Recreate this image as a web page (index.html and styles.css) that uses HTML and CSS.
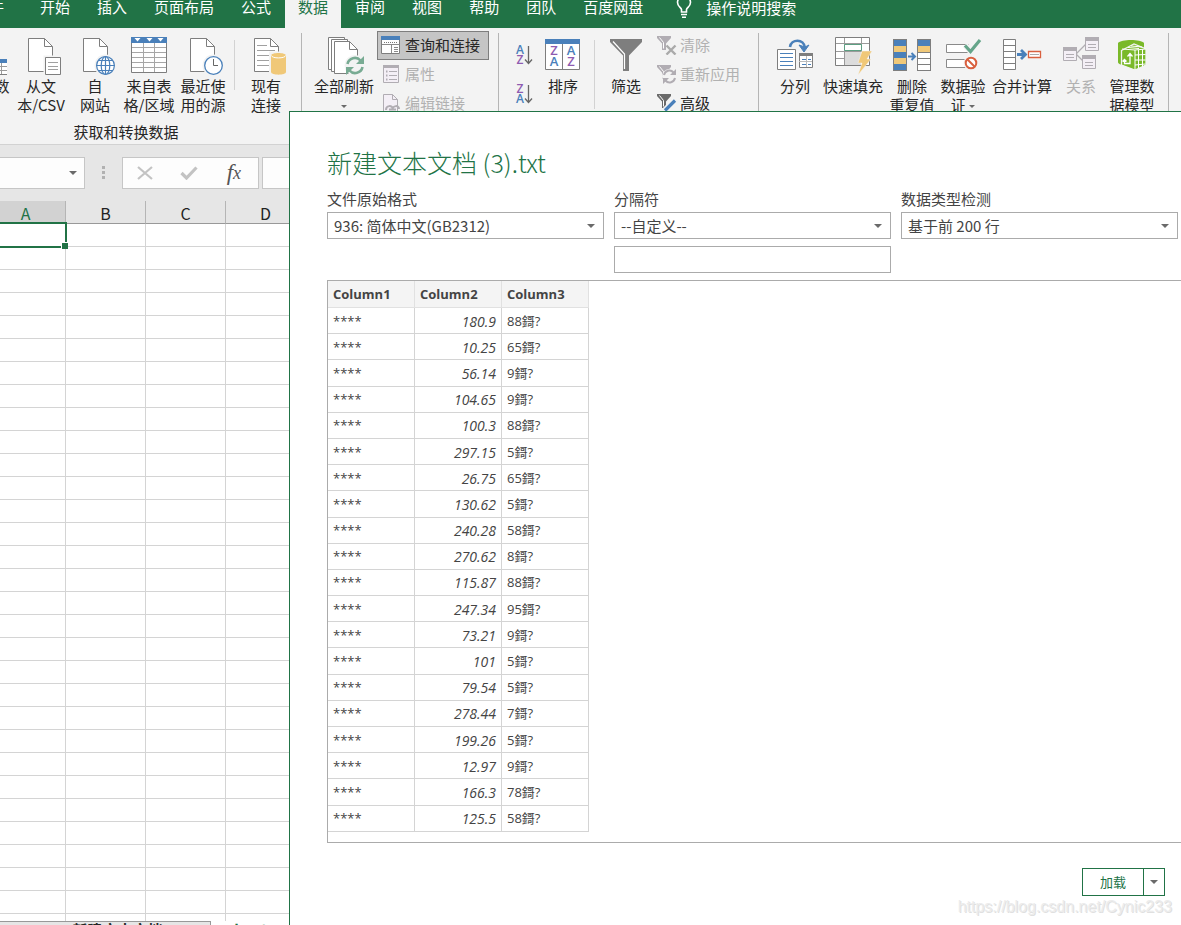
FILE: index.html
```html
<!DOCTYPE html>
<html lang="zh-CN">
<head>
<meta charset="utf-8">
<title>新建文本文档 (3).txt</title>
<link rel="stylesheet" href="styles.css">
</head>
<body>
<div class="app">
  <nav class="tabs">
    <button class="tab tab-file">文件</button>
    <button class="tab">开始</button>
    <button class="tab">插入</button>
    <button class="tab">页面布局</button>
    <button class="tab">公式</button>
    <button class="tab tab-active">数据</button>
    <button class="tab">审阅</button>
    <button class="tab">视图</button>
    <button class="tab">帮助</button>
    <button class="tab">团队</button>
    <button class="tab">百度网盘</button>
    <button class="tell-me">
      <svg width="16" height="22" viewBox="0 0 16 22" fill="none" stroke="#fff" stroke-width="1.6"><path d="M5.500 15v-2.500C5 10.500 1.500 9.500 1.500 5.500a6.500 6.500 0 0 1 13 0c0 4-3.500 5-4 7V15z"/><path d="M5 17.500h6M6 20.200h4"/></svg>
      <span>操作说明搜索</span>
    </button>
  </nav>

  <div class="ribbon">
    <section class="group group-get">
      <div class="row">
        <button class="big">
          <svg width="40" height="40" viewBox="-33 36 40 40"><path d="M-18.500 59.500h26v15h-26z" fill="#fff" stroke="#7e7e7e"/><path d="M-18 59h26v4h-26z" fill="#4a80ba"/><path d="M-18 66.500H8M-18 70.500H8M1.500 63v11" stroke="#9a9a9a"/></svg>
          <span>获取数<br>据</span>
        </button>
        <button class="big">
          <svg width="40" height="40" viewBox="21 36 40 40" fill="#fff" stroke="#7e7e7e"><path d="M28.500 38.500h16l8 8v25h-24z"/><path d="M44.500 38.500v8h8" fill="none"/><path d="M43.500 55.500h19v21h-19z" stroke="none" fill="#f3f3f3"/><path d="M45.500 57.500h15v17h-15z"/><path d="M48 62.500h10M48 66.500h10M48 69.500h10" stroke="#a0a0a0"/></svg>
          <span>从文<br>本/CSV</span>
        </button>
        <button class="big">
          <svg width="40" height="40" viewBox="75 36 40 40" fill="#fff" stroke="#7e7e7e"><path d="M83.500 38.500h16l8 8v25h-24z"/><path d="M99.500 38.500v8h8" fill="none"/><circle cx="105.500" cy="65.500" r="11" fill="#f3f3f3" stroke="none"/><g stroke="#4a80ba" stroke-width="1.200"><circle cx="105.500" cy="65.500" r="8.900"/><ellipse cx="105.500" cy="65.500" rx="4.300" ry="8.900"/><path d="M105.500 56.500v18M96.500 65.500h18M98 60.500h15M98 70.500h15" fill="none"/></g></svg>
          <span>自<br>网站</span>
        </button>
        <button class="big">
          <svg width="40" height="40" viewBox="129 36 40 40"><path d="M131.500 42.500h35v30h-35z" fill="#fff" stroke="#7e7e7e"/><path d="M132 47.500h34M132 52.500h34M132 57.500h34M132 62.500h34M132 67.500h34M143.500 43v29M154.500 43v29" stroke="#a6a6a6"/><path d="M131 37h36v6h-36z" fill="#4a80ba"/><path d="M134.500 38h6l-3 3.500zM146.500 38h6l-3 3.500zM157.500 38h6l-3 3.500z" fill="#fff"/></svg>
          <span>来自表<br>格/区域</span>
        </button>
        <button class="big">
          <svg width="40" height="40" viewBox="183 36 40 40" fill="#fff" stroke="#7e7e7e"><path d="M190.500 38.500h16l8 8v25h-24z"/><path d="M206.500 38.500v8h8" fill="none"/><circle cx="213.500" cy="65.500" r="11" fill="#f3f3f3" stroke="none"/><circle cx="213.500" cy="65.500" r="8.800" stroke="#4a80ba" stroke-width="1.300"/><path d="M213.500 59v6.500h4.500" fill="none" stroke="#666"/></svg>
          <span>最近使<br>用的源</span>
        </button>
        <i class="rule rule-get"></i>
        <button class="big w52">
          <svg width="40" height="40" viewBox="246 36 40 40" fill="#fff" stroke="#7e7e7e"><path d="M254.500 38.500h16l8 8v25h-24z"/><path d="M270.500 38.500v8h8" fill="none"/><path d="M257 45.500h10M257 50.500h18M257 55.500h18M257 60.500h18M257 65.500h18" stroke="#a0a0a0"/><path d="M269 51.500h18v24h-18z" fill="#f3f3f3" stroke="none"/><path d="M271 55.500c0-3.500 15-3.500 15 0v16.500c0 3.500-15 3.500-15 0z" fill="#f0c878" stroke="none"/><path d="M271.500 55.500c0 3.200 14 3.200 14 0" fill="none" stroke="#fff"/></svg>
          <span>现有<br>连接</span>
        </button>
      </div>
      <div class="group-name">获取和转换数据</div>
    </section>

    <section class="group group-conn">
      <div class="row">
        <button class="big w66">
          <svg width="40" height="40" viewBox="324 36 40 40" fill="#fff" stroke="#7e7e7e"><path d="M328.500 37.500h16v32h-16z"/><path d="M331.500 39.500h16v32h-16z"/><path d="M334.500 41.500h15l8 8v24h-23z"/><path d="M349.500 41.500v8h8" fill="none"/><circle cx="355" cy="65.500" r="10.500" fill="#f3f3f3" stroke="none"/><path d="M347.500 64a7.500 7.500 0 0 1 13-3.500M362.500 67a7.500 7.500 0 0 1-13 3.500" fill="none" stroke="#78ab93" stroke-width="2.600"/><path d="M364 56v8h-8zM346 75v-8h8z" fill="#78ab93" stroke="none"/></svg>
          <span>全部刷新<br><i class="caret caret-s"></i></span>
        </button>
        <div class="stack">
          <button class="small small-on">
            <svg width="20" height="20" viewBox="381 35 20 20"><path d="M381.500 36.500h18v17h-18z" fill="#fff" stroke="#7e7e7e"/><path d="M381 36h19v4h-19z" fill="#4a80ba"/><path d="M384 42.500h14" stroke="#777" stroke-dasharray="1 1"/><path d="M382 44.500h18M391.500 44v9M394 47.500h4M394 49.500h4M394 51.500h4" stroke="#8a8a8a"/></svg>
            <span>查询和连接</span>
          </button>
          <button class="small" disabled>
            <svg width="20" height="20" viewBox="381 64 20 20" stroke="#b1adb3"><path d="M383.500 65.500h15v17h-15z" fill="#f4eff6"/><path d="M383 66.500h16" stroke-width="3"/><path d="M389 71.500h8M389 75.500h8M389 79.500h8"/><path d="M386 71.500h1.500M386 75.500h1.500M386 79.500h1.500" stroke-width="2"/></svg>
            <span>属性</span>
          </button>
          <button class="small" disabled>
            <svg width="20" height="20" viewBox="381 93 20 20" stroke="#b1adb3"><path d="M383.500 94.500h9l5 5v13h-14z" fill="#f4eff6"/><path d="M392.500 94.500v5h5" fill="none"/><path d="M386 110c0-5 6-5 7-1M392 110c1-5 7-5 7-1M389 109.500h7" fill="none" stroke-width="2"/></svg>
            <span>编辑链接</span>
          </button>
        </div>
      </div>
    </section>

    <section class="group group-sort">
      <div class="row">
        <div class="az">
          <button class="az-btn" aria-label="升序">
            <svg width="22" height="22" viewBox="512 44 22 22"><text class="g-blue g-sm" x="520" y="54">A</text><text class="g-violet g-sm" x="520" y="64">Z</text><path d="M528.500 46v17M525 59.500l3.500 4 3.500-4" fill="none" stroke="#666" stroke-width="1.300"/></svg>
          </button>
          <button class="az-btn" aria-label="降序">
            <svg width="22" height="22" viewBox="512 44 22 22"><text class="g-violet g-sm" x="520" y="54">Z</text><text class="g-blue g-sm" x="520" y="64">A</text><path d="M528.500 46v17M525 59.500l3.500 4 3.500-4" fill="none" stroke="#666" stroke-width="1.300"/></svg>
          </button>
        </div>
        <button class="big w46">
          <svg width="40" height="40" viewBox="543 36 40 40"><path d="M545.500 39.500h34v30h-34zM562.500 43v26" fill="#fff" stroke="#7e7e7e"/><path d="M545 39h35v5h-35z" fill="#4a80ba"/><text class="g-violet" x="554" y="55">Z</text><text class="g-blue" x="554" y="66">A</text><text class="g-blue" x="571" y="55">A</text><text class="g-violet" x="571" y="66">Z</text></svg>
          <span>排序</span>
        </button>
        <i class="rule rule-sort"></i>
        <button class="big w46">
          <svg width="40" height="40" viewBox="606 36 40 40"><path d="M610 39h32v3l-13 13.500V71h-6V55.500L610 42z" fill="#7e7e7e"/><path d="M613 41.500l11.500 12.500v15" fill="none" stroke="#fff" stroke-width="1.200"/></svg>
          <span>筛选</span>
        </button>
        <div class="stack stack-filter">
          <button class="small" disabled>
            <svg width="20" height="20" viewBox="657 35 20 20"><path d="M657 36h14v2l-5 5.500V50h-4v-6.500L657 38z" fill="#b1adb3"/><path d="M659.500 37.500l4 5v6" fill="none" stroke="#fff"/><path d="M666.500 45.500l9 9M675.500 45.500l-9 9" stroke="#aaa" stroke-width="2.400"/></svg>
            <span>清除</span>
          </button>
          <button class="small" disabled>
            <svg width="20" height="20" viewBox="657 64 20 20"><path d="M657 65h14v2l-5 5.500V79h-4v-6.500L657 67z" fill="#b1adb3"/><path d="M659.500 66.500l4 5v6" fill="none" stroke="#fff"/><circle cx="669.500" cy="76.500" r="7.500" fill="#f3f3f3"/><path d="M664 75a5.500 5.500 0 0 1 9.500-2.500M675 78a5.500 5.500 0 0 1-9.500 2.500" fill="none" stroke="#b1adb3" stroke-width="2"/><path d="M676 69v6h-6zM663 84v-6h6z" fill="#b1adb3"/></svg>
            <span>重新应用</span>
          </button>
          <button class="small">
            <svg width="20" height="20" viewBox="657 93 20 20"><path d="M657 94h14v2l-5 5.500V108h-4v-6.500L657 96z" fill="#6a6a6a"/><path d="M659.500 95.500l4 5v6" fill="none" stroke="#fff"/><path d="M674.500 100.500l-10 10" stroke="#f3f3f3" stroke-width="6"/><path d="M675 100.500l-10 10" stroke="#4a80ba" stroke-width="3.200"/></svg>
            <span>高级</span>
          </button>
        </div>
      </div>
    </section>

    <section class="group group-tools">
      <div class="row">
        <button class="big w46">
          <svg width="40" height="40" viewBox="775 36 40 40" fill="#fff" stroke="#7e7e7e"><path d="M777.500 49.500h18v20h-18z"/><path d="M780 53.500h13M780 57.500h13M780 61.500h13M780 65.500h13" stroke="#4a80ba"/><path d="M799.500 53.500h13v14h-13z"/><path d="M799 54.500h14" stroke-width="3"/><path d="M802 59.500h4M808 59.500h3M802 64.500h4M808 64.500h3" stroke="#4a80ba"/><path d="M806.500 56v11M799 61.500h13" stroke="#bbb"/><path d="M790 47c1-8 14-9 15 1" fill="none" stroke="#4a80ba" stroke-width="2.600"/><path d="M799 45l5 7 5-7-4 2z" fill="#4a80ba" stroke="#4a80ba"/></svg>
          <span>分列</span>
        </button>
        <button class="big w62">
          <svg width="40" height="40" viewBox="833 36 40 40" fill="none" stroke="#9a9a9a"><path d="M835.500 37.500h34v28h-34z" fill="#fff" stroke="#7e7e7e"/><path d="M845 52h16v13h-16z" fill="#dcdcdc" stroke="none"/><path d="M836 43.500h33M836 51.500h33M836 58.500h9M844.500 38v27M861.500 38v14"/><path d="M844.500 44.500h17v6h-17z" fill="#fff" stroke="#5d9f82"/><path d="M862 51h10l-5 8h4l-13 16 4-12h-4z" fill="#f0c878" stroke="#f3f3f3" stroke-width=".5"/></svg>
          <span>快速填充</span>
        </button>
        <button class="big w48">
          <svg width="40" height="40" viewBox="892 36 40 40"><path d="M893 39h14v32h-14zM917 39h14v32h-14z" fill="#7e7e7e"/><path d="M894 40h12v6h-12zM894 52h12v6h-12zM894 64h12v6h-12zM918 40h12v6h-12z" fill="#4a80ba"/><path d="M894 46h12v6h-12zM894 58h12v6h-12zM918 46h12v6h-12z" fill="#f0c878"/><path d="M918 53h12v5h-12zM918 59h12v5h-12zM918 65h12v5h-12z" fill="#fff"/><path d="M908 56.500h7M911.500 53l3.500 3.500-3.500 3.500" fill="none" stroke="#4a80ba" stroke-width="2"/></svg>
          <span>删除<br>重复值</span>
        </button>
        <button class="big w46">
          <svg width="40" height="40" viewBox="943 36 40 40" fill="#fff" stroke="#8a8a8a"><path d="M946.500 44.500h22v8h-22zM946.500 59.500h22v8h-22z"/><path d="M965 45l6 7 9-12" fill="none" stroke="#f3f3f3" stroke-width="6"/><path d="M965 45.500l5.500 6L980 40" fill="none" stroke="#65a58a" stroke-width="3.200"/><circle cx="971" cy="63" r="7.500" fill="#f3f3f3" stroke="none"/><circle cx="971" cy="63" r="5.300" stroke="#d9603f" stroke-width="2"/><path d="M967.500 59.500l7 7" stroke="#d9603f" stroke-width="2"/></svg>
          <span>数据验<br>证 <i class="caret caret-s"></i></span>
        </button>
        <button class="big w64">
          <svg width="40" height="40" viewBox="1002 36 40 40" fill="#fff" stroke="#7e7e7e"><path d="M1003.500 39.500h12v30h-12zM1003 45.500h12M1003 51.500h12M1003 57.500h12M1003 63.500h12"/><path d="M1017 54.500h8M1021 50l4.500 4.500-4.500 4.500" fill="none" stroke="#4a80ba" stroke-width="2.800"/><path d="M1028.500 51.500h12v6h-12z" stroke="#d9603f" stroke-width="1.300"/><path d="M1030 54.500h9" stroke="#aaa"/></svg>
          <span>合并计算</span>
        </button>
        <button class="big w46" disabled>
          <svg width="40" height="40" viewBox="1061 36 40 40" fill="#f4eff6" stroke="#b1adb3"><path d="M1076 54l10-10M1076 54l8 8" stroke-width="1.300"/><path d="M1063.500 47.500h13v13h-13zM1085.500 37.500h13v13h-13zM1082.500 55.500h13v13h-13z"/><path d="M1063 49h14M1085 39h14M1082 57h14" stroke-width="4"/><path d="M1066 54.500h8M1066 57.500h8M1088 44.500h8M1088 47.500h8M1085 62.500h8M1085 65.500h8"/></svg>
          <span>关系</span>
        </button>
        <button class="big w48">
          <svg width="40" height="40" viewBox="1112 36 40 40"><path d="M1118 43c3-4 23-4 26 0v6l-20 16c-3 0-6-1-6-3z" fill="#7ab929"/><path d="M1121.500 50.500L1134 44l12 5v16l-11 5-13.500-5z" fill="#7ab929" stroke="#f3f3f3" stroke-width="1.300"/><path d="M1135 50v20M1135 50l11-1M1135 50l-13-1M1135 55l10.500-.5M1135 60h10.500M1135 65l10.500-1M1138.500 50v18M1142.500 49.500v17M1128 47.500l11 1M1131 46l11 1" stroke="#fff" fill="none"/><path d="M1124.500 60v3.500h5.500V54M1127.500 56.500l2.500-3 2.500 3M1122.500 61.500l2-2 2 2" stroke="#fff" stroke-width="1.300" fill="none"/></svg>
          <span>管理数<br>据模型</span>
        </button>
      </div>
    </section>
  </div>

  <div class="formula-bar">
    <div class="name-box"><input type="text" aria-label="名称框"><i class="caret"></i></div>
    <svg class="dots" width="3" height="13" viewBox="0 0 3 13"><path d="M0 0h3v3H0zM0 5h3v3H0zM0 10h3v3H0z" fill="#b1b1b1"/></svg>
    <div class="fx-box">
      <button aria-label="取消"><svg width="16" height="14" viewBox="0 0 16 14" fill="none" stroke="#c3c3c3" stroke-width="2.200"><path d="M1 1l14 12M15 1L1 13"/></svg></button>
      <button aria-label="输入"><svg width="18" height="14" viewBox="0 0 18 14" fill="none" stroke="#c3c3c3" stroke-width="3.200"><path d="M1.500 7l5 5L16.500 1.500"/></svg></button>
      <button class="fx"><span class="fx-f">f</span><span>x</span></button>
    </div>
    <input class="formula" type="text" aria-label="编辑栏">
  </div>

  <div class="sheet">
    <table class="cells">
      <thead><tr><th class="col-a">A</th><th>B</th><th>C</th><th>D</th></tr></thead>
      <tbody id="cells"></tbody>
    </table>
  </div>
  <div class="sheet-tabs"><button class="sheet-tab">新建文本文档</button><button class="sheet-tab sheet-tab-on">Sheet1</button></div>
</div>

<main class="dialog">
  <h1>新建文本文档 (3).txt</h1>
  <form class="fields">
    <div class="field">
      <label for="origin">文件原始格式</label>
      <div class="select"><select id="origin"><option>936: 简体中文(GB2312)</option></select><i class="caret"></i></div>
    </div>
    <div class="field">
      <label for="delimiter">分隔符</label>
      <div class="select"><select id="delimiter"><option>--自定义--</option></select><i class="caret"></i></div>
      <input class="custom" type="text" aria-label="自定义分隔符">
    </div>
    <div class="field">
      <label for="detect">数据类型检测</label>
      <div class="select"><select id="detect"><option>基于前 200 行</option></select><i class="caret"></i></div>
    </div>
  </form>
  <div class="preview">
    <table class="data">
      <thead><tr><th>Column1</th><th>Column2</th><th>Column3</th></tr></thead>
      <tbody id="data"></tbody>
    </table>
  </div>
  <footer class="actions">
    <button class="load">加载</button><button class="load-more" aria-label="加载选项"><i class="caret"></i></button>
  </footer>
  <div class="watermark">https://blog.csdn.net/Cynic233</div>
</main>
<script src="app.js"></script>
</body>
</html>
```
FILE: styles.css
```css
* { box-sizing: border-box; }
body {
  margin: 0;
  height: 100vh;
  overflow: hidden;
  position: relative;
  font: 15px/19px "Noto Sans CJK SC", sans-serif;
  color: #262626;
  background: #fff;
}
button, input, select { font: inherit; color: inherit; margin: 0; padding: 0; border: 0; background: none; border-radius: 0; }
button { white-space: nowrap; }
svg { display: block; flex: none; }
.app { height: 100%; display: flex; flex-direction: column; }

.caret { display: inline-block; border: 4px solid transparent; border-top-color: #6a6a6a; border-bottom: 0; }
.caret-s { border-width: 3px; border-bottom: 0; vertical-align: middle; }

.tabs { flex: none; height: 28px; display: flex; gap: 1px; background: #217346; overflow: hidden; }
.tab { padding: 0 13px 14px; color: #fff; line-height: 14px; }
.tab-file { margin-left: -26px; padding: 0 22px 14px 0; }
.tab-active { background: #f3f3f3; color: #217346; }
.tell-me { display: flex; align-items: flex-start; gap: 14px; margin-left: 19px; color: #fff; line-height: 16px; }
.tell-me svg { margin-top: -3px; }

.ribbon { flex: none; height: 117px; padding-top: 5px; display: flex; background: #f3f3f3; border-bottom: 1px solid #d2d2d2; }
.group { flex: none; border-right: 1px solid #b5b5b5; display: flex; flex-direction: column; justify-content: space-between; }
.row { display: flex; align-items: flex-start; }
.group-get { margin-left: -51px; padding: 0 9px 0 11px; }
.group-conn { padding: 0 9px; }
.group-sort { padding: 0 16px 0 13px; }
.group-tools { padding: 0 12px 0 13px; }
.group-tools .row { gap: 4px; }
.group-name { padding-bottom: 1px; text-align: center; line-height: 22px; }
.big { width: 54px; padding-top: 3px; display: flex; flex-direction: column; align-items: center; text-align: center; }
.big:disabled, .small:disabled { color: #b1b1b1; }
.w46 { width: 46px; }
.w48 { width: 48px; }
.w52 { width: 52px; }
.w62 { width: 62px; }
.w64 { width: 64px; }
.w66 { width: 66px; }
.rule { width: 1px; background: #d2d2d2; margin-top: 7px; }
.rule-get { height: 50px; margin-left: 4px; margin-right: 5px; }
.rule-sort { height: 69px; margin-left: 8px; margin-right: 8px; }
.stack { width: 112px; margin-top: -2px; }
.stack-filter { width: 93px; }
.small { width: 100%; height: 29px; display: flex; align-items: center; gap: 4px; padding: 0 0 2px 4px; }
.stack-filter .small { padding-left: 8px; gap: 3px; }
.small-on { background: #c5c5c5; outline: 1px solid #7e7e7e; outline-offset: -1px; }
.az { width: 22px; margin-right: 6px; padding-top: 11px; display: flex; flex-direction: column; gap: 17px; }
.az-btn { height: 22px; }
.g-blue, .g-violet { font: 600 13px "Open Sans", sans-serif; text-anchor: middle; fill: #4a80ba; }
.g-violet { fill: #8e5bb0; }
.g-blue.g-sm, .g-violet.g-sm { font-size: 12px; }

.formula-bar { flex: none; height: 56px; padding-top: 12px; display: flex; align-items: flex-start; background: #e6e6e6; }
.name-box, .fx-box, .formula { height: 32px; border: 1px solid #c6c6c6; background: #fdfdfd; }
.name-box { width: 86px; margin-left: -1px; display: flex; align-items: center; padding-right: 7px; }
.name-box input { flex: 1; min-width: 0; }
.dots { margin: 9px 17px 0; }
.fx-box { width: 137px; margin-right: 3px; padding-right: 2px; display: flex; }
.fx-box button { flex: 1; display: flex; align-items: center; justify-content: center; }
.fx-box .fx { font: italic 18px/30px "Liberation Serif", serif; color: #555; }
.fx-f { font-size: 23px; }
.formula { flex: 1; min-width: 0; }

.sheet { flex: 1; min-height: 0; overflow: hidden; }
.cells { width: 306px; table-layout: fixed; border-collapse: separate; border-spacing: 0; font-size: 16px; }
.cells th { height: 23px; padding: 2px 0 0; border-right: 1px solid #b5b5b5; border-bottom: 1px solid #999; background: #e6e6e6; color: #222; font-weight: 400; line-height: 20px; }
.cells .col-a { width: 66px; padding-right: 14px; background: #d2d2d2; color: #217346; border-bottom-color: #217346; }
.cells td { height: 23px; padding: 0; border-right: 1px solid #d4d4d4; border-bottom: 1px solid #d4d4d4; }
.cells .picked { position: relative; }
.picked::before { content: ""; position: absolute; inset: -2px -2px -2px -4px; border: 2px solid #217346; }
.picked::after { content: ""; position: absolute; right: -3px; bottom: -3px; width: 6px; height: 6px; background: #217346; border: solid #fff; border-width: 1px 0 0 1px; }
.sheet-tabs { flex: none; height: 4px; display: flex; align-items: flex-start; overflow: hidden; background: #fff; }
.sheet-tab { width: 211px; height: 16px; padding: 0 46px 0 71px; background: #e6e6e6; border: solid #999; border-width: 1px 1px 0 0; font-weight: 700; line-height: 15px; }
.sheet-tab-on { width: 79px; padding: 0; background: #fff; color: #217346; border: 0; }

.dialog {
  position: absolute;
  inset: 111px 0 0 289px;
  display: flex;
  flex-direction: column;
  padding-left: 37px;
  background: #fff;
  border: solid #217346;
  border-width: 1px 0 0 1px;
  color: #444;
}
.dialog h1 { margin: 32px 0 9px; font: 300 25px/36px "Noto Sans CJK SC", sans-serif; color: #217346; }
.fields { display: grid; grid-template-columns: repeat(3, minmax(0, 1fr)); gap: 10px; padding-right: 3px; }
.field { display: flex; flex-direction: column; }
.field label { line-height: 19px; margin-bottom: 4px; }
.select { position: relative; }
.select select { display: block; width: 100%; height: 27px; padding: 0 0 1px 6px; appearance: none; border: 1px solid #ababab; background: #fff; }
.select .caret { position: absolute; right: 9px; top: 12px; }
.custom { height: 27px; margin-top: 7px; border: 1px solid #ababab; }
.preview { flex: 1; min-height: 0; margin-top: 7px; border: solid #ababab; border-width: 1px 0 1px 1px; overflow: hidden; }
.data { width: 261px; height: 551px; table-layout: fixed; border-collapse: separate; border-spacing: 0; font: 13px/18px "Open Sans", "Noto Sans CJK SC", sans-serif; }
.data th, .data td { padding: 0 5px; border: solid #d4d4d4; border-width: 0 1px 1px 0; text-align: left; }
.data th { height: 27px; background: #f4f4f4; border-color: #e1e1e1; font-weight: 700; }
.data .num { text-align: right; font-size: 14px; font-style: italic; padding-top: 2px; }
.actions { flex: none; height: 82px; padding: 25px 16px 0 0; display: flex; justify-content: flex-end; align-items: flex-start; }
.load, .load-more { height: 28px; border: 1px solid #217346; background: #fff; }
.load { width: 62px; padding-bottom: 2px; font-size: 13px; color: #217346; }
.load-more { width: 22px; margin-left: -1px; display: flex; align-items: center; justify-content: center; }
.watermark { position: absolute; right: 9px; bottom: 8px; font: 16px/20px "Liberation Sans", sans-serif; color: #ececec; text-shadow: 1px 1px 0 #e0e0e0; }
```
FILE: app.js
```js
const rows = [
  ["180.9", "88"], ["10.25", "65"], ["56.14", "9"], ["104.65", "9"], ["100.3", "88"],
  ["297.15", "5"], ["26.75", "65"], ["130.62", "5"], ["240.28", "58"], ["270.62", "8"],
  ["115.87", "88"], ["247.34", "95"], ["73.21", "9"], ["101", "5"], ["79.54", "5"],
  ["278.44", "7"], ["199.26", "5"], ["12.97", "9"], ["166.3", "78"], ["125.5", "58"]
];
document.getElementById("data").innerHTML = rows
  .map(([price, rate]) => `<tr><td>****</td><td class="num">${price}</td><td>${rate}鎶?</td></tr>`)
  .join("");
document.getElementById("cells").innerHTML = Array.from({ length: 40 }, (_, i) =>
  `<tr><td${i === 0 ? ' class="picked"' : ""}></td><td></td><td></td><td></td></tr>`).join("");
```
